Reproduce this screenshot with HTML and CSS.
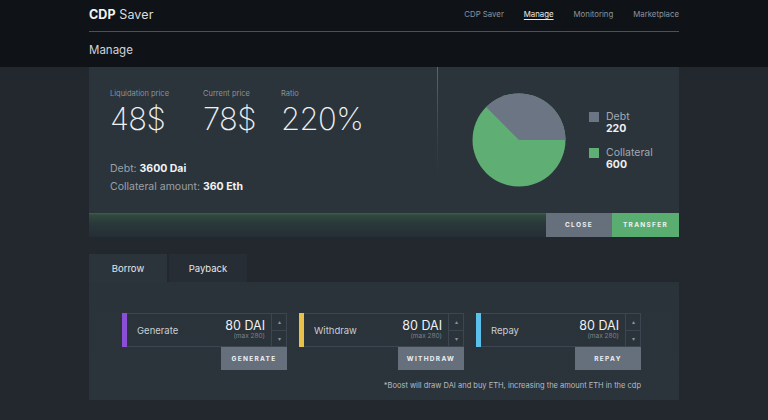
FILE: index.html
```html
<!DOCTYPE html>
<html>
<head>
<meta charset="utf-8">
<link rel="stylesheet" href="styles.css">
</head>
<body>
<div class="top">
  <div class="wrap">
    <div class="bar">
      <div class="logo"><b>CDP</b> Saver</div>
      <nav class="nav">
        <a>CDP Saver</a>
        <a class="active">Manage</a>
        <a>Monitoring</a>
        <a>Marketplace</a>
      </nav>
    </div>
    <div class="title">Manage</div>
  </div>
</div>
<div class="wrap">
  <section class="card">
    <div class="card-body">
      <div class="stats">
        <div class="figures">
          <div class="fig"><div class="lbl">Liquidation price</div><div class="big">48$</div></div>
          <div class="fig f2"><div class="lbl">Current price</div><div class="big">78$</div></div>
          <div class="fig f3"><div class="lbl">Ratio</div><div class="big">220%</div></div>
        </div>
        <div class="info">
          <div>Debt: <b>3600 Dai</b></div>
          <div>Collateral amount: <b>360 Eth</b></div>
        </div>
      </div>
      <div class="chart">
        <svg class="pie" width="94" height="94" viewBox="-47 -47 94 94">
          <circle r="46.5" fill="#5fae74"/>
          <path d="M0 0 L46.5 0 A46.5 46.5 0 0 0 -32.9 -32.9 Z" fill="#6b7583"/>
        </svg>
        <div class="legend">
          <div class="li"><span class="sq gray"></span><div><div class="ln">Debt</div><div class="lv">220</div></div></div>
          <div class="li"><span class="sq green"></span><div><div class="ln">Collateral</div><div class="lv">600</div></div></div>
        </div>
      </div>
    </div>
    <div class="card-foot">
      <div class="glow"></div>
      <button class="btn close">CLOSE</button>
      <button class="btn transfer">TRANSFER</button>
    </div>
  </section>

  <div class="tabs">
    <div class="tab on">Borrow</div>
    <div class="tab">Payback</div>
  </div>
  <section class="panel">
    <div class="groups">
      <div class="group">
        <div class="field">
          <span class="accent purple"></span>
          <span class="fname">Generate</span>
          <span class="val"><span class="amt">80 DAI</span><span class="max">(max 280)</span></span>
          <span class="arrows"><span>&#9652;</span><span>&#9662;</span></span>
        </div>
        <button class="act">GENERATE</button>
      </div>
      <div class="group">
        <div class="field">
          <span class="accent yellow"></span>
          <span class="fname">Withdraw</span>
          <span class="val"><span class="amt">80 DAI</span><span class="max">(max 280)</span></span>
          <span class="arrows"><span>&#9652;</span><span>&#9662;</span></span>
        </div>
        <button class="act">WITHDRAW</button>
      </div>
      <div class="group">
        <div class="field">
          <span class="accent blue"></span>
          <span class="fname">Repay</span>
          <span class="val"><span class="amt">80 DAI</span><span class="max">(max 280)</span></span>
          <span class="arrows"><span>&#9652;</span><span>&#9662;</span></span>
        </div>
        <button class="act">REPAY</button>
      </div>
    </div>
    <p class="note">*Boost will draw DAI and buy ETH, increasing the amount ETH in the cdp</p>
  </section>
</div>
</body>
</html>
```
FILE: styles.css
```css
* { box-sizing: border-box; }
html, body { margin: 0; padding: 0; }
body {
  background: #22282e;
  font-family: "Inter", "Open Sans", "Liberation Sans", sans-serif;
  color: #e6e9ec;
  height: 420px;
  overflow: hidden;
}
.wrap { width: 590px; margin: 0 auto; }
.top { background: #0f1317; height: 67px; }
.bar {
  height: 32px;
  display: flex;
  align-items: center;
  justify-content: space-between;
  border-bottom: 1px solid #236a3c;
  padding-bottom: 3px;
}
.logo { font-size: 12.5px; color: #d8dcdf; letter-spacing: 0.1px; }
.logo b { font-weight: 700; color: #f1f3f4; }
.nav { display: flex; gap: 20px; font-size: 7.8px; color: #8d949b; }
.nav a.active { color: #e8ebee; text-decoration: underline; text-underline-offset: 2px; }
.title { height: 34px; display: flex; align-items: center; font-size: 11.5px; color: #cfd3d7; padding-top: 1px; }

.card { background: #2b333b; }
.card-body { display: flex; height: 146px; }
.stats {
  width: 349px;
  padding: 22px 0 0 21px;
  position: relative;
}
.stats::after {
  content: "";
  position: absolute;
  right: 0; top: 0;
  width: 1px; height: 110px;
  background: linear-gradient(#3f7a52, #2f4a3c 60%, rgba(43,51,59,0));
}
.figures { display: flex; }
.fig { width: 93px; }
.f2 { width: 78px; }
.lbl { font-size: 7.5px; color: #8a9299; }
.big { font-size: 31px; font-weight: 200; color: #eef0f2; line-height: 36px; margin-top: 3px; letter-spacing: -0.6px; }
.info { margin-top: 23px; font-size: 10.5px; color: #9aa1a7; line-height: 18px; }
.info b { color: #f1f3f5; font-weight: 700; }
.chart { flex: 1; display: flex; align-items: flex-start; padding: 26px 0 0 34px; }
.pie { display: block; }
.legend { margin-left: 23px; margin-top: 18px; display: flex; flex-direction: column; gap: 12px; }
.li { display: flex; gap: 7px; align-items: flex-start; }
.sq { width: 10px; height: 10px; margin-top: 1px; }
.sq.gray { background: #6b7583; }
.sq.green { background: #5fae74; }
.ln { font-size: 10.5px; color: #a3aab1; line-height: 12px; }
.lv { font-size: 10.5px; color: #eef0f2; font-weight: 700; line-height: 12px; }

.card-foot { display: flex; height: 24px; background: #242b32; }
.glow { flex: 1; background: linear-gradient(#3a634a 0, #30493d 2px, #29383a 45%, #252e36 100%); }
.btn {
  border: 0; margin: 0; padding: 0;
  font-family: inherit;
  font-size: 6.5px; font-weight: 700; letter-spacing: 1.3px;
  color: #eef1f3; height: 24px;
}
.close { width: 66px; background: #66707c; }
.transfer { width: 67px; background: #5aad70; }

.tabs { display: flex; gap: 2px; margin-top: 17px; }
.tab {
  width: 78px; height: 28px;
  display: flex; align-items: center; justify-content: center;
  font-size: 9.5px; color: #e4e7ea;
  background: #262d34;
}
.tab.on { background: #2b333b; }
.panel {
  background: linear-gradient(#2a323a, #2b333b);
  height: 118px;
  padding: 31px 38px 0 33px;
}
.groups { display: flex; gap: 12px; }
.group { width: 165px; display: flex; flex-direction: column; align-items: flex-end; }
.field {
  width: 165px; height: 34px;
  display: flex; align-items: stretch;
  border: 1px solid #3d4650;
  border-left: 0;
}
.accent { width: 5px; margin-top: -1px; margin-bottom: -1px; }
.purple { background: #8a4fd6; }
.yellow { background: #e9c14a; }
.blue { background: #5cc0ec; }
.fname { flex: 1; display: flex; align-items: center; padding-left: 10px; font-size: 9.5px; color: #c9ced3; }
.val { display: flex; flex-direction: column; align-items: flex-end; justify-content: center; padding-right: 6px; }
.amt { font-size: 12.5px; color: #eef0f2; line-height: 13px; }
.max { font-size: 6.5px; color: #7c848c; line-height: 9px; }
.arrows { width: 15px; display: flex; flex-direction: column; border-left: 1px solid #3d4650; }
.arrows span { flex: 1; display: flex; align-items: center; justify-content: center; font-size: 6px; color: #8b939a; }
.arrows span + span { border-top: 1px solid #3d4650; }
.act {
  width: 66px; height: 23px;
  border: 0; margin: 0; padding: 0;
  background: #66707c;
  font-family: inherit; font-size: 6.5px; font-weight: 700; letter-spacing: 1.3px; color: #eef1f3;
}
.note { margin: 11px 0 0; text-align: right; font-size: 7.5px; color: #b7bcc1; }
```
